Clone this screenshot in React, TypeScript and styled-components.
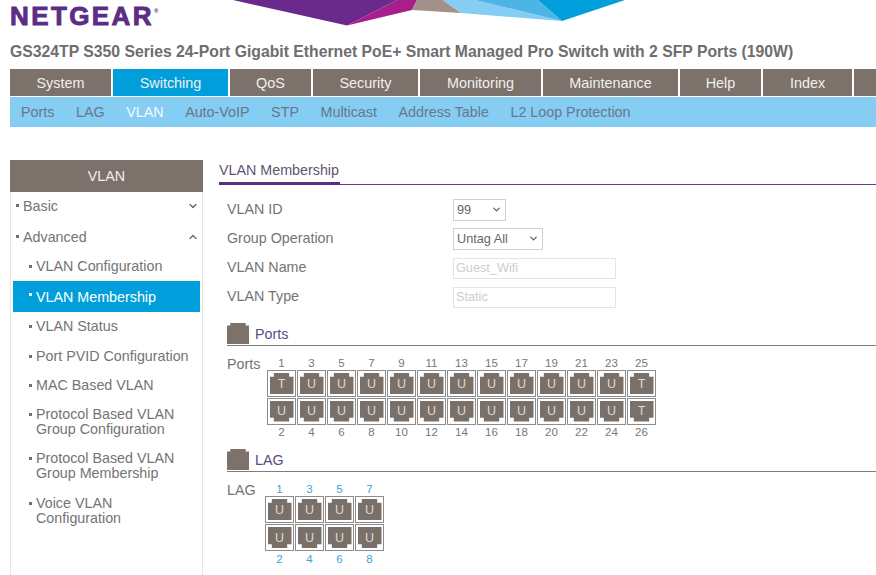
import React from 'react';
import styled, { createGlobalStyle } from 'styled-components';
import { ChevronDown, ChevronUp } from 'lucide-react';

const topTabs = [
  { label: 'System', width: 101 },
  { label: 'Switching', width: 115, active: true },
  { label: 'QoS', width: 81 },
  { label: 'Security', width: 105 },
  { label: 'Monitoring', width: 121 },
  { label: 'Maintenance', width: 135 },
  { label: 'Help', width: 81 },
  { label: 'Index', width: 89 },
  { label: '', width: 30 },
];

const subTabs = ['Ports', 'LAG', 'VLAN', 'Auto-VoIP', 'STP', 'Multicast', 'Address Table', 'L2 Loop Protection'];

const sideItems = [
  { label: 'VLAN Configuration' },
  { label: 'VLAN Membership', active: true },
  { label: 'VLAN Status' },
  { label: 'Port PVID Configuration' },
  { label: 'MAC Based VLAN' },
  { label: 'Protocol Based VLAN Group Configuration' },
  { label: 'Protocol Based VLAN Group Membership' },
  { label: 'Voice VLAN Configuration' },
];

const portModes: Record<number, string> = { 1: 'T', 25: 'T', 26: 'T' };

const PortGrid: React.FC<{ count: number; $lag?: boolean }> = ({ count, $lag }) => {
  const tops = Array.from({ length: count / 2 }, (_, i) => i * 2 + 1);
  const bottoms = tops.map((n) => n + 1);
  const mode = (n: number) => ($lag ? 'U' : portModes[n] || 'U');
  return (
    <Grid $lag={$lag}>
      {tops.map((n) => (
        <PortNumber key={n} $lag={$lag}>{n}</PortNumber>
      ))}
      {tops.map((n) => (
        <PortCell key={n} $lag={$lag}>
          <Jack>{mode(n)}</Jack>
        </PortCell>
      ))}
      {bottoms.map((n) => (
        <PortCell key={n} $lag={$lag}>
          <Jack $flip>{mode(n)}</Jack>
        </PortCell>
      ))}
      {bottoms.map((n) => (
        <PortNumber key={n} $lag={$lag}>{n}</PortNumber>
      ))}
    </Grid>
  );
};

const App: React.FC = () => {
  return (
    <>
      <GlobalStyle />
      <Page>
        <Banner viewBox="0 0 876 26" aria-hidden="true">
          <polygon points="233,0 347,25.5 397,0" fill="#692a8c" />
          <polygon points="347,25.5 412,10 417,0 397,0" fill="#a81f8c" />
          <polygon points="417,0 412,10 461,13 443,0" fill="#a39189" />
          <polygon points="443,0 461,13 562,21 475,0" fill="#85cdf2" />
          <polygon points="475,0 562,21 538,0" fill="#4db4e6" />
          <polygon points="538,0 562,21 625,0" fill="#009fdb" />
        </Banner>

        <Logo>
          NETGEAR<LogoMark>®</LogoMark>
        </Logo>
        <Title>GS324TP S350 Series 24-Port Gigabit Ethernet PoE+ Smart Managed Pro Switch with 2 SFP Ports (190W)</Title>

        <TopNav>
          {topTabs.map((tab, i) => (
            <TopTab key={i} $active={tab.active} style={{ width: tab.width }}>
              {tab.label}
            </TopTab>
          ))}
        </TopNav>

        <SubNav>
          {subTabs.map((tab) => (
            <SubTab key={tab} $active={tab === 'VLAN'}>{tab}</SubTab>
          ))}
        </SubNav>

        <Body>
          <Sidebar>
            <SideHeader>VLAN</SideHeader>
            <SideList>
              <SideGroup>
                <span>Basic</span>
                <ChevronDown size={12} strokeWidth={2.5} />
              </SideGroup>
              <SideGroup>
                <span>Advanced</span>
                <ChevronUp size={12} strokeWidth={2.5} />
              </SideGroup>
              {sideItems.map((item) => (
                <SideItem key={item.label} $active={item.active}>
                  <SideItemText>{item.label}</SideItemText>
                </SideItem>
              ))}
            </SideList>
          </Sidebar>

          <Content>
            <PanelTabs>
              <PanelTab>VLAN Membership</PanelTab>
            </PanelTabs>

            <Form>
              <FormRow>
                <FormLabel>VLAN ID</FormLabel>
                <SelectBox $width={53}>
                  99
                  <ChevronDown size={11} strokeWidth={3} />
                </SelectBox>
              </FormRow>
              <FormRow>
                <FormLabel>Group Operation</FormLabel>
                <SelectBox $width={90}>
                  Untag All
                  <ChevronDown size={11} strokeWidth={3} />
                </SelectBox>
              </FormRow>
              <FormRow>
                <FormLabel>VLAN Name</FormLabel>
                <DisabledInput>Guest_Wifi</DisabledInput>
              </FormRow>
              <FormRow>
                <FormLabel>VLAN Type</FormLabel>
                <DisabledInput>Static</DisabledInput>
              </FormRow>
            </Form>

            <SectionHead>
              <SectionIcon />
              <SectionTitle>Ports</SectionTitle>
            </SectionHead>
            <PortsBlock>
              <PortsLabel>Ports</PortsLabel>
              <PortGrid count={26} />
            </PortsBlock>

            <SectionHead $lag>
              <SectionIcon />
              <SectionTitle>LAG</SectionTitle>
            </SectionHead>
            <PortsBlock>
              <PortsLabel $lag>LAG</PortsLabel>
              <PortGrid count={8} $lag />
            </PortsBlock>
          </Content>
        </Body>
      </Page>
    </>
  );
};

const GlobalStyle = createGlobalStyle`
  html, body {
    margin: 0;
    height: 100%;
    background: #fff;
    font-family: 'Liberation Sans', Arial, sans-serif;
    color: #6f6f6f;
  }
`;

const Page = styled.div`
  position: relative;
  width: 876px;
  height: 575px;
  overflow: hidden;
  background: #fff;
`;

const Banner = styled.svg`
  position: absolute;
  top: 0;
  left: 0;
  width: 876px;
  height: 26px;
`;

const Logo = styled.div`
  padding: 2px 0 0 10px;
  height: 29px;
  box-sizing: border-box;
  font-size: 26px;
  line-height: 29px;
  font-weight: 700;
  letter-spacing: 2.4px;
  color: #5c2d86;
  -webkit-text-stroke: 0.9px #5c2d86;
`;

const LogoMark = styled.sup`
  font-size: 6px;
  line-height: 0;
  letter-spacing: 0;
  vertical-align: 12px;
  -webkit-text-stroke: 0;
`;

const Title = styled.div`
  margin-top: 14px;
  padding-left: 10px;
  height: 19px;
  font-size: 15.76px;
  line-height: 18px;
  font-weight: 700;
  color: #6e6e6e;
  white-space: nowrap;
`;

const TopNav = styled.div`
  display: flex;
  gap: 2px;
  margin-top: 7px;
  padding-left: 10px;
  height: 27px;
`;

const TopTab = styled.div<{ $active?: boolean }>`
  flex: none;
  display: flex;
  align-items: center;
  justify-content: center;
  background: ${(p) => (p.$active ? '#009fdb' : '#7d726b')};
  color: #f1efed;
  font-size: 14.4px;
`;

const SubNav = styled.div`
  display: flex;
  align-items: center;
  gap: 21.6px;
  margin: 1px 0 0 10px;
  padding-left: 11px;
  height: 30px;
  background: #85cdf2;
`;

const SubTab = styled.div<{ $active?: boolean }>`
  font-size: 14.3px;
  color: ${(p) => (p.$active ? '#f2fafe' : '#66788a')};
`;

const Body = styled.div`
  display: flex;
  gap: 16px;
  margin-top: 33px;
  padding-left: 10px;
  height: 415px;
`;

const Sidebar = styled.div`
  flex: none;
  width: 193px;
  display: flex;
  flex-direction: column;
`;

const SideHeader = styled.div`
  height: 32px;
  display: flex;
  align-items: center;
  justify-content: center;
  background: #7d726b;
  color: #f1efed;
  font-size: 14.3px;
`;

const SideList = styled.div`
  flex: 1;
  padding: 0 2px;
  border: 1px solid #e6e6e6;
  border-width: 0 1px;
`;

const SideGroup = styled.div`
  position: relative;
  display: flex;
  align-items: center;
  justify-content: space-between;
  height: 28px;
  margin-bottom: 3px;
  padding: 0 1px 0 10px;
  font-size: 14.3px;
  color: #747474;

  &:nth-child(2) {
    margin-bottom: 1px;
  }

  svg {
    color: #666;
  }

  &::before {
    content: '';
    position: absolute;
    left: 3px;
    top: 12px;
    width: 3px;
    height: 3px;
    background: #6f6f6f;
  }
`;

const SideItem = styled.div<{ $active?: boolean }>`
  position: relative;
  padding: ${(p) => (p.$active ? '9px 8px 7px 23px' : '7px 8px 7.25px 23px')};
  background: ${(p) => (p.$active ? '#009fdb' : 'transparent')};
  color: ${(p) => (p.$active ? '#fff' : '#747474')};

  &::before {
    content: '';
    position: absolute;
    left: 16px;
    top: ${(p) => (p.$active ? '12px' : '13px')};
    width: 3px;
    height: 3px;
    background: ${(p) => (p.$active ? '#fff' : '#6f6f6f')};
  }
`;

const SideItemText = styled.div`
  font-size: 14.3px;
  line-height: 15px;
`;

const Content = styled.div`
  flex: 1;
  min-width: 0;
`;

const PanelTabs = styled.div`
  height: 25px;
  border-bottom: 1px solid #6d3a8e;
  box-sizing: border-box;
  display: flex;
`;

const PanelTab = styled.div`
  padding-top: 2px;
  width: 121px;
  height: 25px;
  box-sizing: border-box;
  border-bottom: 3px solid #5c2d86;
  font-size: 14.3px;
  line-height: 17px;
  color: #5f5470;
  white-space: nowrap;
`;

const Form = styled.div`
  margin-top: 14px;
  padding-left: 8px;
  display: flex;
  flex-direction: column;
  gap: 7px;
`;

const FormRow = styled.div`
  display: flex;
  align-items: center;
  height: 22px;
`;

const FormLabel = styled.div`
  width: 226px;
  padding-bottom: 2px;
  font-size: 14.3px;
  color: #747474;
`;

const SelectBox = styled.div<{ $width: number }>`
  width: ${(p) => p.$width}px;
  height: 22px;
  box-sizing: border-box;
  display: flex;
  align-items: center;
  justify-content: space-between;
  padding: 0 3px 1px 3px;
  border: 1px solid #d0d0d0;
  font-size: 12.7px;
  color: #666;
`;

const DisabledInput = styled.div`
  width: 163px;
  height: 21px;
  box-sizing: border-box;
  display: flex;
  align-items: center;
  padding-left: 2px;
  border: 1px solid #e4e4e4;
  font-size: 12.7px;
  color: #cdcdcd;
`;

const SectionHead = styled.div<{ $lag?: boolean }>`
  display: flex;
  align-items: flex-end;
  gap: 6px;
  margin: ${(p) => (p.$lag ? '9px' : '14px')} 0 0 8px;
  height: 23px;
  border-bottom: 1px solid #7d7d7d;
`;

const SectionIcon = styled.div`
  width: 22px;
  height: 21px;
  margin-bottom: 1px;
  background: #7d726b;
  clip-path: polygon(15% 0, 85% 0, 85% 12%, 100% 12%, 100% 100%, 0 100%, 0 12%, 15% 12%);
`;

const SectionTitle = styled.div`
  font-size: 14.3px;
  line-height: 21px;
  color: #5c4a82;
`;

const PortsBlock = styled.div`
  display: flex;
  margin: 10px 0 0 8px;
`;

const PortsLabel = styled.div<{ $lag?: boolean }>`
  width: ${(p) => (p.$lag ? '38px' : '40px')};
  font-size: 14.3px;
  line-height: 17px;
  color: #747474;
`;

const Grid = styled.div<{ $lag?: boolean }>`
  display: grid;
  grid-template-columns: repeat(${(p) => (p.$lag ? 4 : 13)}, 30px);
`;

const PortNumber = styled.div<{ $lag?: boolean }>`
  height: 14px;
  line-height: 14px;
  margin-right: 1px;
  text-align: center;
  font-size: 11.5px;
  color: ${(p) => (p.$lag ? '#3f9fd6' : '#777')};
`;

const PortCell = styled.div<{ $lag?: boolean }>`
  width: 29px;
  height: 27px;
  margin-bottom: ${(p) => (p.$lag ? '1px' : '0.5px')};
  box-sizing: border-box;
  display: flex;
  align-items: center;
  justify-content: center;
  border: 1px solid #8c8c8c;
  background: #fff;
`;

const Jack = styled.div<{ $flip?: boolean }>`
  width: 24px;
  height: 21px;
  display: flex;
  align-items: center;
  justify-content: center;
  background: #7a706a;
  color: #ded9d1;
  font-size: 12.5px;
  clip-path: ${(p) =>
    p.$flip
      ? 'polygon(0 0, 100% 0, 100% 82%, 82% 82%, 82% 100%, 18% 100%, 18% 82%, 0 82%)'
      : 'polygon(18% 0, 82% 0, 82% 18%, 100% 18%, 100% 100%, 0 100%, 0 18%, 18% 18%)'};
`;

export default App;
